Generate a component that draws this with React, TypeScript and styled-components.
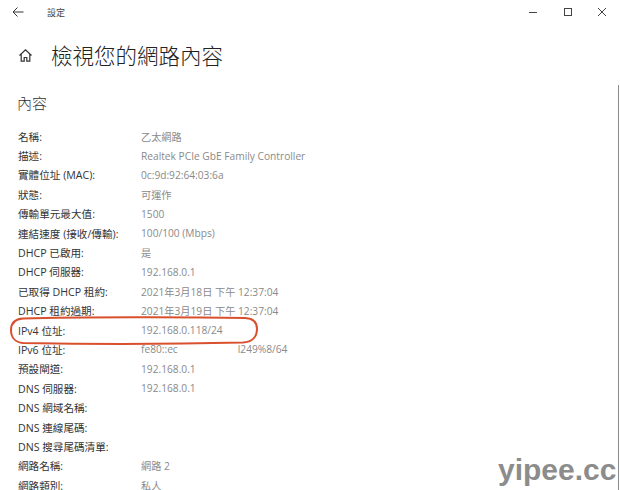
import React from "react";
import styled, { createGlobalStyle } from "styled-components";

const Global = createGlobalStyle`
  html, body { margin: 0; padding: 0; background: #fff; overflow: hidden; }
  body { font-family: "Open Sans", "Noto Sans CJK TC", sans-serif; }
`;

const Page = styled.div`
  position: relative;
  width: 620px;
  height: 490px;
  overflow: hidden;
  background: #fff;
  color: #2b2b2b;
`;

const TitleBar = styled.header`
  display: flex;
  align-items: center;
  height: 24px;
  padding-left: 12px;
`;

const BackButton = styled.svg`
  width: 12px;
  height: 12px;
  stroke: #333;
  fill: none;
  stroke-width: 1;
`;

const AppName = styled.span`
  margin-left: 23px;
  font-size: 9px;
  color: #444;
`;

const WindowControls = styled.div`
  display: flex;
  margin-left: auto;
  margin-right: 0;
`;

const WindowButton = styled.svg`
  width: 35px;
  height: 12px;
  stroke: #444;
  fill: none;
  stroke-width: 1;
`;

const Heading = styled.div`
  display: flex;
  align-items: center;
  height: 30px;
  margin-top: 16px;
  padding-left: 18px;
`;

const HomeIcon = styled.svg`
  width: 15px;
  height: 15px;
  stroke: #333;
  fill: none;
  stroke-width: 1.2;
`;

const HeadingText = styled.h1`
  margin: 0 0 0 18px;
  font-size: 21.5px;
  font-weight: 300;
  line-height: 30px;
  font-family: "Noto Sans CJK TC", sans-serif;
  color: #222;
`;

const SectionTitle = styled.h2`
  margin: 22px 0 0 17px;
  font-size: 15px;
  font-weight: 300;
  line-height: 22px;
  font-family: "Noto Sans CJK TC", sans-serif;
  color: #333;
`;

const Details = styled.dl`
  display: grid;
  grid-template-columns: 123px 1fr;
  grid-auto-rows: 19.4px;
  margin: 12.5px 0 0 18px;
  font-size: 10.2px;
  align-items: center;
`;

const Label = styled.dt`
  margin: 0;
  font-size: 10.6px;
  color: #333;
  white-space: nowrap;
`;

const Value = styled.dd`
  margin: 0;
  color: #8a8a8a;
  white-space: nowrap;
`;

const Gap = styled.span`
  display: inline-block;
  width: 60px;
`;

const Scrollbar = styled.div`
  position: absolute;
  right: 1px;
  top: 85px;
  bottom: 0;
  width: 1px;
  background: #8c8c8c;
`;

const Highlight = styled.svg`
  position: absolute;
  left: 9px;
  top: 316px;
  width: 250px;
  height: 29px;
  fill: none;
  stroke: #d9502e;
  stroke-width: 2;
`;

const Watermark = styled.div`
  position: absolute;
  left: 498px;
  top: 453px;
  font-family: "Liberation Sans", sans-serif;
  font-size: 30px;
  font-weight: 700;
  line-height: 34px;
  color: #8c8c8c;
`;

const rows: [string, React.ReactNode][] = [
  ["名稱:", "乙太網路"],
  ["描述:", "Realtek PCIe GbE Family Controller"],
  ["實體位址 (MAC):", "0c:9d:92:64:03:6a"],
  ["狀態:", "可運作"],
  ["傳輸單元最大值:", "1500"],
  ["連結速度 (接收/傳輸):", "100/100 (Mbps)"],
  ["DHCP 已啟用:", "是"],
  ["DHCP 伺服器:", "192.168.0.1"],
  ["已取得 DHCP 租約:", "2021年3月18日 下午 12:37:04"],
  ["DHCP 租約過期:", "2021年3月19日 下午 12:37:04"],
  ["IPv4 位址:", "192.168.0.118/24"],
  ["IPv6 位址:", <>fe80::ec<Gap />l249%8/64</>],
  ["預設閘道:", "192.168.0.1"],
  ["DNS 伺服器:", "192.168.0.1"],
  ["DNS 網域名稱:", ""],
  ["DNS 連線尾碼:", ""],
  ["DNS 搜尋尾碼清單:", ""],
  ["網路名稱:", "網路 2"],
  ["網路類別:", "私人"],
];

export default function App() {
  return (
    <Page>
      <Global />
      <TitleBar>
        <BackButton viewBox="0 0 12 12">
          <path d="M11.5 6H1M5.5 1.5 1 6l4.5 4.5" />
        </BackButton>
        <AppName>設定</AppName>
        <WindowControls>
          <WindowButton viewBox="0 0 35 12">
            <path d="M14 6.5h8" />
          </WindowButton>
          <WindowButton viewBox="0 0 35 12">
            <rect x="14.5" y="2.5" width="7" height="7" />
          </WindowButton>
          <WindowButton viewBox="0 0 35 12">
            <path d="M13 2l8 8M21 2l-8 8" />
          </WindowButton>
        </WindowControls>
      </TitleBar>
      <Heading>
        <HomeIcon viewBox="0 0 15 15">
          <path d="M1.5 7.5 7.5 1.8l6 5.7M3.2 6.2v7h3V9.5h2.6v3.7h3v-7" />
        </HomeIcon>
        <HeadingText>檢視您的網路內容</HeadingText>
      </Heading>
      <SectionTitle>內容</SectionTitle>
      <Details>
        {rows.map(([label, value]) => (
          <React.Fragment key={label}>
            <Label>{label}</Label>
            <Value>{value}</Value>
          </React.Fragment>
        ))}
      </Details>
      <Scrollbar />
      <Highlight viewBox="0 0 250 29">
        <path d="M14 2.5C70 1 180 1 236 2c8 .3 12 4 12 11 0 8-5 13-14 13.5C170 28 70 28 14 27 6 26.5 2 21 2 14 2 7 6 3 14 2.5Z" />
      </Highlight>
      <Watermark>yipee.cc</Watermark>
    </Page>
  );
}
